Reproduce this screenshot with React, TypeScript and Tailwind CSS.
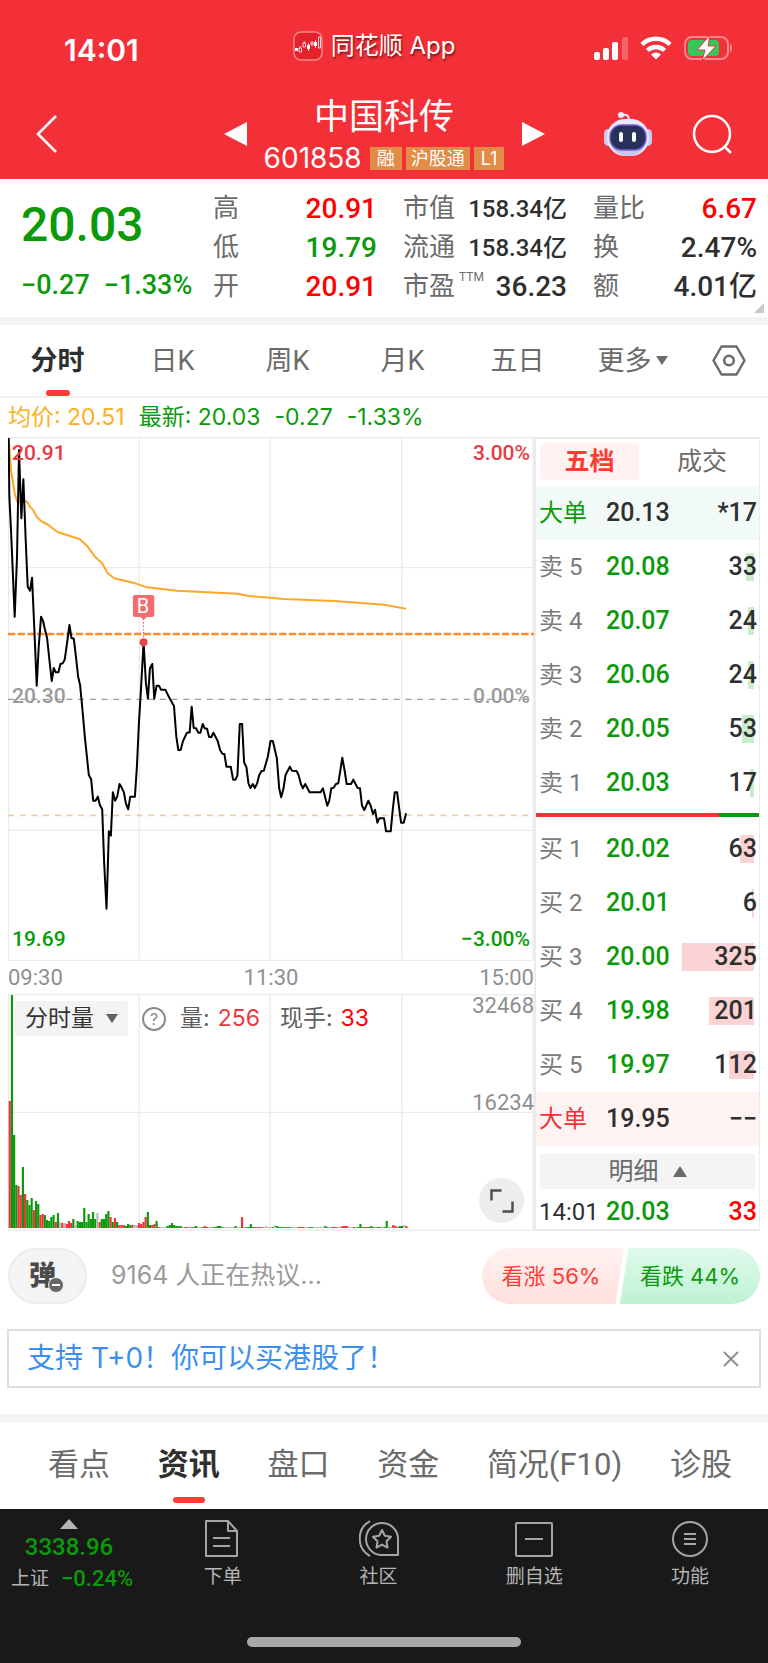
import React, { useState } from 'react';

const PRICE_POINTS =
  '2,3 4,179 9,279 20,539 27,359 33,39 40,244 46,127 53,309 59,449 66,461 72,422 79,579 86,746 92,629 99,539 105,552 111,579 117,603 124,669 131,732 137,693 143,706 151,706 157,681 164,679 170,667 176,624 184,564 190,603 197,605 204,664 210,719 216,745 223,819 230,899 242,1014 249,1027 255,1091 262,1091 269,1079 275,1104 282,1117 288,1279 295,1415 298,1319 302,1183 308,1196 314,1066 321,1091 327,1079 334,1041 340,1051 347,1066 353,1099 360,1117 366,1079 380,1079 386,989 392,859 398,759 406,616 413,739 419,785 425,694 432,681 438,785 445,746 452,746 458,758 471,758 484,784 497,807 504,899 510,939 517,939 524,912 536,887 544,886 550,809 556,873 563,874 570,887 576,887 583,861 589,874 596,875 602,900 609,900 615,887 628,912 635,939 642,950 648,951 654,989 667,989 674,1028 681,1028 687,1015 694,861 701,861 707,976 714,991 720,1039 726,1053 733,1041 739,1053 746,1039 752,1015 759,1002 766,1001 778,959 786,912 793,912 805,964 812,1054 818,1081 825,1054 831,1014 844,989 850,1001 864,1002 870,1014 877,1041 883,1054 890,1041 903,1066 936,1066 943,1054 956,1106 962,1091 968,1054 975,1052 982,1041 989,1039 995,1001 1001,962 1008,1001 1014,1041 1027,1041 1034,1028 1047,1053 1054,1054 1060,1106 1067,1119 1079,1091 1086,1106 1093,1131 1099,1118 1106,1157 1112,1144 1126,1144 1132,1183 1146,1183 1152,1119 1158,1066 1165,1066 1172,1119 1177,1157 1185,1157 1192,1129';

const AVERAGE_POINTS =
  '2,3 9,99 20,169 28,195 51,191 59,197 66,209 76,220 86,240 99,252 121,264 148,285 214,306 238,328 262,361 282,379 298,408 318,424 381,439 416,451 466,457 506,461 688,470 721,477 786,482 826,486 976,492 1126,503 1192,515';

// one bar per minute: r = up, g = down, n = flat
const VOLUMES =
  'r127 g233 g93 g43 r42 r33 g61 r34 g28 g23 g30 r18 g27 g24 r13 r14 g13 g8 g7 g11 g13 r6 g15 n6 r5 n5 r4 r7 r5 g9 n3 g7 g6 g6 g20 g6 g14 g9 g16 g9 n15 r6 g9 g9 g14 g17 r11 g6 r10 g6 r3 r3 r3 g2 g4 g3 r3 n3 n3 r5 r4 r6 r11 g16 g3 r3 r4 g7 r1 n1 n1 n1 g2 g3 g5 g3 g2 g2 g2 n1 r1 r1 n1 r1 g1 g2 n1 n1 g1 r2 r1 n1 n1 g1 g1 g2 g2 g1 n1 n1 n1 n1 n1 g2 n1 n1 r11 n1 g1 g1 g4 g1 r1 r1 r1 r1 n1 n2 n1 n1 r1 n3 g2 r1 g1 r1 r1 r1 r1 n1 n1 n1 g1 g1 g1 n1 n1 g1 g1 n1 n1 n1 n1 n1 g2 g1 n1 r1 r1 r1 n1 r1 r2 r2 r2 n1 n1 g1 n1 g1 g4 r1 g1 r1 g1 g2 g1 n1 g1 g1 n1 g1 g7 n1 n1 r3 r2 r1 g2 g2 n3 r2';

const BAR_COLORS: Record<string, string> = { r: '#ef3338', g: '#0a9a0a', n: '#b9b9b9' };

const ASKS = [
  { level: 5, price: '20.08', qty: 33 },
  { level: 4, price: '20.07', qty: 24 },
  { level: 3, price: '20.06', qty: 24 },
  { level: 2, price: '20.05', qty: 53 },
  { level: 1, price: '20.03', qty: 17 },
];

const BIDS = [
  { level: 1, price: '20.02', qty: 63 },
  { level: 2, price: '20.01', qty: 6 },
  { level: 3, price: '20.00', qty: 325 },
  { level: 4, price: '19.98', qty: 201 },
  { level: 5, price: '19.97', qty: 112 },
];

const MAX_QTY = 325;

function StatusBar() {
  return (
    <div className="grid grid-cols-[1fr_auto_1fr] items-center pt-7 pl-16 pr-9">
      <div className="pt-1 text-[30px] leading-9 font-semibold">14:01</div>
      <div className="flex items-center gap-2 pr-12 pb-1">
        <svg className="size-[30px]" viewBox="0 0 30 30" fill="none">
          <rect x="1" y="1" width="28" height="28" rx="7" fill="#e3222b" stroke="#f7868b" strokeWidth="1.5" />
          <path d="M2 17h3v3H2zM14 14h3v4h-3zM21 11h3v4h-3z" fill="#fff" />
          <path d="M6 17h2.500v4H6zM10 12h2.500v4H10zM18 11h2v3h-2zM25.500 6h2v11h-2zM11.200 10v2M7.200 15v2M15.500 12v8M22.500 9v8" stroke="#fff" strokeWidth="0.800" />
        </svg>
        <span className="text-2xl leading-8 [text-shadow:1px_2px_2px_rgba(0,0,0,0.5)]">同花顺 App</span>
      </div>
      <div className="flex items-center justify-end gap-3">
        <svg className="h-6 w-[34px]" viewBox="0 0 34 24" fill="#fff">
          <rect x="0" y="16" width="6" height="8" rx="2" />
          <rect x="9" y="12" width="6" height="12" rx="2" />
          <rect x="18" y="6" width="6" height="18" rx="2" />
          <rect x="28" y="1" width="6" height="23" rx="2" opacity="0.25" />
        </svg>
        <svg className="h-6 w-8" viewBox="0 0 32 24" fill="none" stroke="#fff" strokeWidth="4.500">
          <path d="M2 8.500a20 20 0 0 1 28 0" />
          <path d="M7.500 14.500a12 12 0 0 1 17 0" />
          <path d="M16 23.500l-5-5a7 7 0 0 1 10 0z" fill="#fff" stroke="none" />
        </svg>
        <svg className="h-[26px] w-12" viewBox="0 0 48 26" fill="none">
          <rect x="1" y="2" width="43" height="22" rx="7" stroke="#f98a8e" strokeWidth="2" />
          <rect x="4" y="5" width="31" height="16" rx="4" fill="#34c759" />
          <path d="M46 9v8c3-1 3-7 0-8z" fill="#f98a8e" />
          <path d="M26 0L13 15h8l-3 11 14-15h-8z" fill="#fff" stroke="#f33038" strokeWidth="1" />
        </svg>
      </div>
    </div>
  );
}

function Header() {
  return (
    <header className="bg-[#f33038] pb-[5px] text-white font-['Inter','Noto_Sans_CJK_SC',sans-serif]">
      <StatusBar />
      <div className="grid grid-cols-[1fr_auto_1fr] items-center pt-[26px]">
        <button type="button" aria-label="返回" className="justify-self-start pl-[35px]">
          <svg className="h-10 w-6" viewBox="0 0 24 40" fill="none" stroke="#fff" strokeWidth="2.500">
            <path d="M21 2L3 20l18 18" />
          </svg>
        </button>
        <div className="flex items-center">
          <button type="button" aria-label="上一只">
            <svg className="h-[26px] w-[23px]" viewBox="0 0 23 26" fill="#fff">
              <path d="M23 1v24L0 13z" />
            </svg>
          </button>
          <div className="flex w-[275px] flex-col items-center">
            <h1 className="text-[35px] leading-[44px]">中国科传</h1>
            <div className="mt-1 flex items-center gap-1 leading-8">
              <span className="mr-1 text-[28px]">601858</span>
              <span className="bg-[#e38c48] px-[7px] text-lg leading-[23px]">融</span>
              <span className="bg-[#e38c48] px-[5px] text-lg leading-[23px]">沪股通</span>
              <span className="bg-[#e38c48] px-[7px] text-lg leading-[23px]">L1</span>
            </div>
          </div>
          <button type="button" aria-label="下一只">
            <svg className="h-[26px] w-[23px]" viewBox="0 0 23 26" fill="#fff">
              <path d="M0 1v24l23-12z" />
            </svg>
          </button>
        </div>
        <div className="flex items-center justify-between pl-[59px] pr-9">
          <button type="button" aria-label="智能助手">
            <svg className="size-12" viewBox="0 0 48 48" fill="none">
              <path d="M17 5c5-1 8 0 8 5" stroke="#e5e4f8" strokeWidth="2" />
              <circle cx="17" cy="5" r="3" fill="#eef" />
              <rect x="0" y="19" width="9" height="17" rx="4.500" fill="#c9cbef" />
              <rect x="39" y="19" width="9" height="17" rx="4.500" fill="#c9cbef" />
              <rect x="3" y="9" width="42" height="37" rx="18" fill="#e9e9fa" />
              <path d="M8 37c4 7 10 9 16 9s12-2 16-9z" fill="#c8c6ec" />
              <rect x="6" y="15" width="36" height="25" rx="11.500" fill="#27315a" stroke="#7a5bd6" strokeWidth="1.500" />
              <rect x="15" y="22" width="4" height="10" rx="2" fill="#fff" />
              <rect x="28" y="22" width="4" height="10" rx="2" fill="#fff" />
            </svg>
          </button>
          <button type="button" aria-label="搜索">
            <svg className="size-10" viewBox="0 0 40 40" fill="none" stroke="#fff" strokeWidth="2.500">
              <circle cx="20" cy="20" r="18" />
              <path d="M32 32l7 7" />
            </svg>
          </button>
        </div>
      </div>
    </header>
  );
}

interface StatProps {
  label: string;
  sup?: string;
  value: string;
  tone?: string;
}

function Stat({ label, sup, value, tone = 'text-[28px] text-[#2f2f2f]' }: StatProps) {
  return (
    <div className="flex items-center justify-between">
      <dt className="flex text-[26px] text-[#6b6b6b]">
        {label}
        {sup && <span className="ml-1 text-xs leading-5">{sup}</span>}
      </dt>
      <dd className={`font-medium ${tone}`}>{value}</dd>
    </div>
  );
}

function Quote() {
  const red = 'text-[28px] text-[#fe0000]';
  return (
    <section className="relative flex border-b-8 border-[#f4f4f4] pt-2.5 pr-[11px] pb-[11px] pl-[21px]">
      <div className="w-[192px] shrink-0 text-[#0a9a0a]">
        <div className="pt-2 text-5xl leading-[56px] font-medium">20.03</div>
        <div className="flex gap-3.5 pt-3.5 text-[27px] leading-9 font-medium">
          <span>−0.27</span>
          <span>−1.33%</span>
        </div>
      </div>
      <dl className="grid flex-1 grid-cols-3 gap-x-[26px] leading-[39px]">
        <Stat label="高" value="20.91" tone={red} />
        <Stat label="市值" value="158.34亿" tone="text-2xl text-[#2f2f2f]" />
        <Stat label="量比" value="6.67" tone={red} />
        <Stat label="低" value="19.79" tone="text-[28px] text-[#0a9a0a]" />
        <Stat label="流通" value="158.34亿" tone="text-2xl text-[#2f2f2f]" />
        <Stat label="换" value="2.47%" />
        <Stat label="开" value="20.91" tone={red} />
        <Stat label="市盈" sup="TTM" value="36.23" />
        <Stat label="额" value="4.01亿" />
      </dl>
      <svg className="absolute right-1 bottom-1 size-2.5" viewBox="0 0 10 10" fill="#c8c8c8">
        <path d="M10 0v10H0z" />
      </svg>
    </section>
  );
}

function PeriodTabs() {
  const [active, setActive] = useState('分时');
  return (
    <nav className="grid grid-cols-[repeat(6,115fr)_78fr] border-b-2 border-[#f2f2f2] text-[27px] text-[#6b6b6b]">
      {['分时', '日K', '周K', '月K', '五日', '更多'].map((tab) => (
        <button
          key={tab}
          type="button"
          onClick={() => setActive(tab)}
          className="flex flex-col items-center pt-4"
        >
          <span className={`flex items-center gap-1 leading-10 ${tab === active ? 'font-bold text-[#2f2f2f]' : ''}`}>
            {tab}
            {tab === '更多' && (
              <svg className="h-2.5 w-3" viewBox="0 0 12 10" fill="#6b6b6b">
                <path d="M0 0h12L6 9z" />
              </svg>
            )}
          </span>
          <span className={`mt-[9px] h-1.5 w-6 rounded-full ${tab === active ? 'bg-[#ff3b34]' : ''}`} />
        </button>
      ))}
      <button type="button" aria-label="设置" className="flex justify-center pt-5">
        <svg className="h-[31px] w-[34px]" viewBox="0 0 34 31" fill="none" stroke="#6b6b6b" strokeWidth="2.500">
          <path d="M9.500 1.500h15l8 14-8 14h-15l-8-14z" strokeLinejoin="round" />
          <circle cx="17" cy="15.500" r="4.800" />
        </svg>
      </button>
    </nav>
  );
}

function PriceChart() {
  return (
    <div className="relative h-[524px]">
      <svg className="block size-full" viewBox="0 0 1575 1572" preserveAspectRatio="none" fill="none">
        <path
          d="M1.500 0V1572M393 0V1572M785 0V1572M1179 0V1572M1573 0V1572M0 1.500H1575M0 392H1575M0 1180H1575M0 1570H1575"
          stroke="#ebebeb"
          strokeWidth="4"
        />
        <path d="M0 787H1575" stroke="#9a9a9a" strokeWidth="4" strokeDasharray="18 17" />
        <path d="M0 1135H1575" stroke="#e8cfa9" strokeWidth="5" strokeDasharray="18 17" />
        <path d="M0 591H1575" stroke="#fb8b2e" strokeWidth="7" strokeDasharray="22 7" />
        <polyline points={AVERAGE_POINTS} stroke="#ffa726" strokeWidth="6" strokeLinejoin="round" />
        <polyline points={PRICE_POINTS} stroke="#000" strokeWidth="6" strokeLinejoin="round" />
        <path d="M406 545V610" stroke="#ef5458" strokeWidth="3" strokeDasharray="5 5" />
        <path d="M380 474h52q6 0 6 6v54q0 6-6 6h-16l-10 9-10-9h-16q-6 0-6-6v-54q0-6 6-6z" fill="#f26c70" />
        <circle cx="406" cy="616" r="12" fill="#e8484d" />
      </svg>
      <span className="absolute top-[158px] left-[124px] w-[22px] text-center text-xl leading-[22px] text-white">B</span>
      <div className="absolute inset-x-1 top-1 flex justify-between text-[21px] leading-6 font-medium text-[#e83a3f]">
        <span>20.91</span>
        <span>3.00%</span>
      </div>
      <div className="absolute inset-x-1 top-[247px] flex justify-between text-[21px] leading-6 font-medium text-[#9a9a9a]">
        <span>20.30</span>
        <span>0.00%</span>
      </div>
      <div className="absolute inset-x-1 bottom-2.5 flex justify-between text-[21px] leading-6 font-medium text-[#0a9a0a]">
        <span>19.69</span>
        <span>−3.00%</span>
      </div>
    </div>
  );
}

function VolumeChart() {
  return (
    <div className="relative h-[237px]">
      <svg className="block size-full" viewBox="0 0 1575 711" preserveAspectRatio="none" fill="none">
        <path
          d="M1.500 0V711M393 0V711M785 0V711M1179 0V711M1573 0V711M0 1.500H1575M0 355H1575M0 708H1575"
          stroke="#ebebeb"
          strokeWidth="4"
        />
        {VOLUMES.split(' ').map((bar, i) => {
          const height = Number(bar.slice(1)) * 3;
          return (
            <rect key={i} x={2 + i * 6.5625} y={702 - height} width="6.500" height={height} fill={BAR_COLORS[bar[0]]} />
          );
        })}
      </svg>
      <div className="absolute top-[7px] left-[7px] flex items-center text-[23px] leading-[35px] text-[#5f5f5f] font-['Inter','Noto_Sans_CJK_SC',sans-serif]">
        <button type="button" className="flex items-center gap-3 rounded bg-[#f3f3f3] px-2.5 text-[#333]">
          分时量
          <svg className="h-2.5 w-3" viewBox="0 0 12 10" fill="#5f5f5f">
            <path d="M0 0h12L6 9z" />
          </svg>
        </button>
        <button
          type="button"
          aria-label="说明"
          className="ml-3.5 size-6 rounded-full border-2 border-[#8a8a8a] text-base leading-5 text-[#8a8a8a]"
        >
          ?
        </button>
        <span className="ml-3.5">量:</span>
        <span className="ml-2 text-[#e83a3f]">256</span>
        <span className="ml-5">现手:</span>
        <span className="ml-2 text-[#fe0000]">33</span>
      </div>
      <span className="absolute top-0 right-0 text-[22px] leading-6 text-[#8f8f8f]">32468</span>
      <span className="absolute top-[97px] right-0 text-[22px] leading-6 text-[#8f8f8f]">16234</span>
      <button
        type="button"
        aria-label="全屏"
        className="absolute right-2.5 bottom-2 flex size-[45px] items-center justify-center rounded-full bg-[#ededed]"
      >
        <svg className="size-6" viewBox="0 0 24 24" fill="none" stroke="#4f4f4f" strokeWidth="2.500">
          <path d="M1.500 11.500v-10h10M22.500 12.500v10h-10" />
        </svg>
      </button>
    </div>
  );
}

interface LevelRowProps {
  side: string;
  level: number;
  price: string;
  qty: number;
}

function LevelRow({ side, level, price, qty }: LevelRowProps) {
  return (
    <tr className="h-[54px]">
      <th className="pl-[3px] text-left text-2xl font-normal text-[#7a7a7a]">
        {side} {level}
      </th>
      <td className="text-[#0a9a0a]">{price}</td>
      <td className="relative pr-0.5 text-right">
        <span
          className={`absolute inset-y-[13px] right-[5px] ${side === '卖' ? 'bg-[#cbeccb]' : 'bg-[#fbd3d4]'}`}
          style={{ width: `${Math.ceil((qty / MAX_QTY) * 72)}px` }}
        />
        <span className="relative">{qty}</span>
      </td>
    </tr>
  );
}

function OrderBook() {
  return (
    <aside className="flex flex-col border-2 border-r border-[#ebebeb]">
      <div className="grid grid-cols-[102fr_120fr] px-1 pt-1 pb-1.5 text-[25px] leading-[37px] text-[#6b6b6b]">
        <button type="button" className="rounded bg-[#fff2f1] font-bold text-[#ff3b34]">五档</button>
        <button type="button" className="pl-2.5">成交</button>
      </div>
      <table className="w-full table-fixed text-[25px] font-medium text-[#2f2f2f]">
        <colgroup>
          <col className="w-[70px]" />
          <col className="w-[76px]" />
          <col />
        </colgroup>
        <tbody>
          <tr className="h-[54px] bg-[#f1faf6]">
            <th className="pl-[3px] text-left text-2xl font-normal text-[#0a9a0a]">大单</th>
            <td>20.13</td>
            <td className="pr-0.5 text-right">*17</td>
          </tr>
          {ASKS.map((row) => (
            <LevelRow key={row.level} side="卖" {...row} />
          ))}
          <tr>
            <td colSpan={3} className="pt-[3px] pb-[5px]">
              <div className="flex h-1">
                <div className="w-[82%] bg-[#f03338]" />
                <div className="flex-1 bg-[#0a9a0a]" />
              </div>
            </td>
          </tr>
          {BIDS.map((row) => (
            <LevelRow key={row.level} side="买" {...row} />
          ))}
          <tr className="h-[54px] bg-[#fff3f2]">
            <th className="pl-[3px] text-left text-2xl font-normal text-[#f03338]">大单</th>
            <td>19.95</td>
            <td className="pr-0.5 text-right">−−</td>
          </tr>
        </tbody>
      </table>
      <button
        type="button"
        className="mx-1 mt-2 flex items-center justify-center gap-3.5 bg-[#f4f4f4] text-[25px] leading-[35px] text-[#6b6b6b]"
      >
        明细
        <svg className="h-[11px] w-3.5" viewBox="0 0 14 11" fill="#6b6b6b">
          <path d="M7 0l7 11H0z" />
        </svg>
      </button>
      <div className="flex flex-1 items-center pt-1.5 pr-0.5 pl-[3px] text-[25px] leading-8 font-medium">
        <span className="w-[67px] text-2xl leading-8 font-normal text-[#2f2f2f]">14:01</span>
        <span className="flex-1 text-[#0a9a0a]">20.03</span>
        <span className="text-[#fe0000]">33</span>
      </div>
    </aside>
  );
}

function ChartPanel() {
  return (
    <section className="px-2">
      <div className="flex gap-3.5 text-[23px] leading-[39px] text-[#0a9a0a] font-['Inter','Noto_Sans_CJK_SC',sans-serif]">
        <span className="text-[#fdb022]">均价: 20.51</span>
        <span>最新: 20.03</span>
        <span>-0.27</span>
        <span>-1.33%</span>
      </div>
      <div className="grid grid-cols-[526fr_226fr]">
        <div>
          <PriceChart />
          <div className="flex justify-between text-[22px] leading-[33px] text-[#8f8f8f]">
            <span>09:30</span>
            <span>11:30</span>
            <span>15:00</span>
          </div>
          <VolumeChart />
        </div>
        <OrderBook />
      </div>
    </section>
  );
}

function Discussion() {
  return (
    <section className="flex items-center pt-[17px] pr-2 pl-2 font-['Inter','Noto_Sans_CJK_SC',sans-serif]">
      <button
        type="button"
        className="relative h-14 w-[79px] rounded-full border-2 border-[#ececec] bg-[#f4f4f4] pr-2.5 text-[27px] leading-[48px] font-black text-[#4b4b4b]"
      >
        弹
        <svg className="absolute right-[21px] bottom-[9px] size-4" viewBox="0 0 16 16">
          <circle cx="8" cy="8" r="7.500" fill="#666" stroke="#f4f4f4" />
          <path d="M4 8h8" stroke="#fff" strokeWidth="2" />
        </svg>
      </button>
      <span className="ml-6 flex-1 text-[25px] text-[#9a9a9a]">9164 人正在热议...</span>
      <div className="flex text-[22px] leading-[56px]">
        <button
          type="button"
          className="w-[142px] rounded-l-full bg-linear-to-b from-[#fff2f0] to-[#ffe0dd] pr-1 text-[#ff3b34] [clip-path:polygon(0_0,100%_0,94%_100%,0_100%)]"
        >
          看涨 56%
        </button>
        <button
          type="button"
          className="-ml-1 w-[140px] rounded-r-full bg-linear-to-b from-[#e1faec] to-[#bdf2d3] text-[#0a9a0a] [clip-path:polygon(6%_0,100%_0,100%_100%,0_100%)]"
        >
          看跌 44%
        </button>
      </div>
    </section>
  );
}

function Notice() {
  const [open, setOpen] = useState(true);
  if (!open) return null;
  return (
    <div className="mx-[7px] mt-[25px] mb-[26px] flex items-center justify-between border-2 border-[#dedede] pr-5 pl-[18px] text-[28px] leading-[55px] font-['Inter','Noto_Sans_CJK_SC',sans-serif]">
      <a href="#hk" className="text-[#3d8fee]">支持 T+0！你可以买港股了！</a>
      <button type="button" aria-label="关闭" onClick={() => setOpen(false)}>
        <svg className="size-4" viewBox="0 0 16 16" stroke="#8f8f8f" strokeWidth="2">
          <path d="M1 1l14 14M15 1L1 15" />
        </svg>
      </button>
    </div>
  );
}

function InfoTabs() {
  const [active, setActive] = useState('资讯');
  return (
    <nav className="flex justify-between border-t-8 border-[#f4f4f4] pt-5 pr-9 pb-1.5 pl-12 text-[31px] leading-[46px] text-[#6b6b6b]">
      {['看点', '资讯', '盘口', '资金', '简况(F10)', '诊股'].map((tab) => (
        <button key={tab} type="button" onClick={() => setActive(tab)} className="flex flex-col items-center">
          <span className={tab === active ? 'font-bold text-[#2f2f2f]' : ''}>{tab}</span>
          <span className={`mt-[9px] h-1.5 w-8 rounded-full ${tab === active ? 'bg-[#ff3b34]' : ''}`} />
        </button>
      ))}
    </nav>
  );
}

const NAV_ITEMS = [
  {
    label: '下单',
    icon: <path d="M3 2h22l9 10v25H3zM25 2v10h9M10 19h17M10 27h17" />,
  },
  {
    label: '社区',
    icon: (
      <>
        <path d="M39 36H22a16 16 0 1 1 17-17z" />
        <path d="M11 2a20 20 0 0 0 0 35" />
        <path d="M23 11l2.800 5.800 6.200 1-4.500 4.500 1 6.300-5.500-3-5.500 3 1-6.300-4.500-4.500 6.200-1z" />
      </>
    ),
  },
  {
    label: '删自选',
    icon: (
      <>
        <rect x="2" y="4" width="36" height="33" rx="1" />
        <path d="M11 20h18" />
      </>
    ),
  },
  {
    label: '功能',
    icon: (
      <>
        <circle cx="20" cy="20" r="17" />
        <path d="M14 15h12M14 20h12M14 25h12" />
      </>
    ),
  },
];

function BottomBar() {
  return (
    <footer className="bg-[#191919] pb-4 text-[#b5b5b5]">
      <div className="flex items-start pt-2.5">
        <button type="button" className="flex w-[138px] shrink-0 flex-col items-center">
          <svg className="h-2.5 w-[18px]" viewBox="0 0 18 10" fill="#b5b5b5">
            <path d="M9 0l9 10H0z" />
          </svg>
          <span className="text-2xl leading-9 font-medium text-[#0a9a0a]">3338.96</span>
          <span className="flex gap-3 pl-1.5 text-[19px] leading-7">
            上证
            <span className="text-[22px] font-medium text-[#0a9a0a]">−0.24%</span>
          </span>
        </button>
        <div className="grid flex-1 grid-cols-4 pl-[7px]">
          {NAV_ITEMS.map(({ label, icon }) => (
            <button key={label} type="button" className="flex flex-col items-center">
              <svg className="size-10" viewBox="0 0 40 40" fill="none" stroke="#a5a5a5" strokeWidth="2" strokeLinejoin="round">
                {icon}
              </svg>
              <span className="pt-1.5 text-[19px] leading-6">{label}</span>
            </button>
          ))}
        </div>
      </div>
      <div className="mx-auto mt-[44px] h-2.5 w-[274px] rounded-full bg-[#a8a8a8]" />
    </footer>
  );
}

export default function App() {
  return (
    <div className="bg-white font-['Roboto','Noto_Sans_CJK_SC',sans-serif]">
      <Header />
      <Quote />
      <PeriodTabs />
      <ChartPanel />
      <Discussion />
      <Notice />
      <InfoTabs />
      <BottomBar />
    </div>
  );
}
